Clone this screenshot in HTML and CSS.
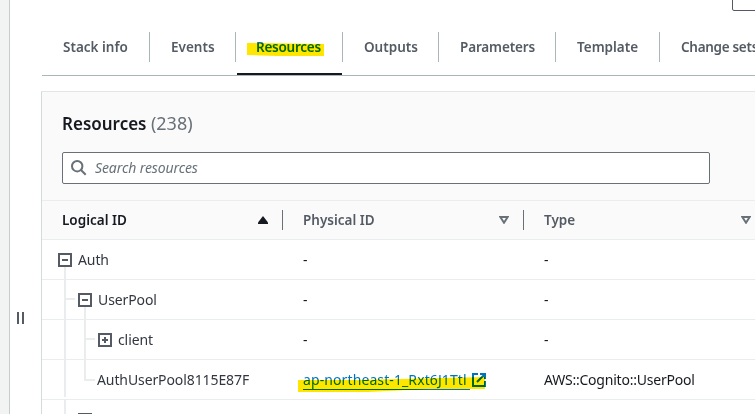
FILE: index.html
```html
<!DOCTYPE html>
<html lang="en">
<head>
<meta charset="utf-8">
<title>Stack resources</title>
<link rel="stylesheet" href="styles.css">
</head>
<body>
<div class="app">
  <aside class="rail"></aside>
  <div class="handle"><i></i><i></i></div>
  <main class="main">
    <span class="button-edge"></span>
    <nav class="tabs">
      <a class="tab tab-info"><span>Stack info</span></a>
      <a class="tab tab-events"><span>Events</span></a>
      <a class="tab tab-resources active"><span>Resources</span>
        <svg class="marker" width="77" height="13"><path d="M0 0 77 1V13H30L0 12Z"/></svg>
      </a>
      <a class="tab tab-outputs"><span>Outputs</span></a>
      <a class="tab tab-parameters"><span>Parameters</span></a>
      <a class="tab tab-template"><span>Template</span></a>
      <a class="tab tab-changes"><span>Change sets</span></a>
    </nav>
    <section class="panel">
      <header class="panel-head">
        <h2><span class="title">Resources</span> <span class="count">(238)</span></h2>
        <div class="search">
          <svg width="16" height="16" viewBox="0 0 16 16"><circle cx="6.2" cy="6.2" r="5.2"/><path d="M10 10l4.7 4.7"/></svg>
          <span class="placeholder">Search resources</span>
        </div>
      </header>
      <div class="row head">
        <div class="cell sorted"><span>Logical ID</span><svg width="10" height="8"><path class="up" d="M5 0 10 6.5V8H0V6.5Z"/></svg></div>
        <div class="cell"><span>Physical ID</span><svg width="10" height="8"><path class="down" d="M1.3 1H8.7L5 6.7Z"/></svg></div>
        <div class="cell"><span>Type</span><svg width="10" height="8"><path class="down" d="M1.3 1H8.7L5 6.7Z"/></svg></div>
      </div>
      <div class="body">
        <svg class="guides" width="80" height="174"><path d="M23 27V157M23 160V174M24 59H33M43 67V140H53M44 99H53"/></svg>
        <div class="row">
          <div class="cell level-0"><svg class="toggle" width="14" height="14"><rect x="1" y="1" width="12" height="12"/><path d="M4 7H10"/></svg><span>Auth</span></div>
          <div class="cell">-</div><div class="cell">-</div>
        </div>
        <div class="row">
          <div class="cell level-1"><svg class="toggle" width="14" height="14"><rect x="1" y="1" width="12" height="12"/><path d="M4 7H10"/></svg><span>UserPool</span></div>
          <div class="cell">-</div><div class="cell">-</div>
        </div>
        <div class="row">
          <div class="cell level-2"><svg class="toggle" width="14" height="14"><rect x="1" y="1" width="12" height="12"/><path d="M4 7H10M7 4V10"/></svg><span>client</span></div>
          <div class="cell">-</div><div class="cell">-</div>
        </div>
        <div class="row">
          <div class="cell leaf"><span>AuthUserPool8115E87F</span></div>
          <div class="cell"><a class="link"><span class="link-text">ap-northeast-1_Rxt6J1Ttl</span><svg class="external" width="14" height="14"><path d="M6 1H1V13H13V8M8 1H13V6M12.5 1.5 5 9"/></svg>
            <svg class="marker" width="187" height="15"><path d="M0 3 60 3 187 0V12L130 12 70 15H0Z"/></svg></a></div>
          <div class="cell"><span class="type">AWS::Cognito::UserPool</span></div>
        </div>
        <div class="row">
          <div class="cell level-1"><svg class="toggle" width="14" height="14"><rect x="1" y="1" width="12" height="12"/><path d="M4 7H10"/></svg></div>
          <div class="cell"></div><div class="cell"></div>
        </div>
      </div>
    </section>
  </main>
</div>
</body>
</html>
```
FILE: styles.css
```css
* { box-sizing: border-box; }
body { margin: 0; overflow: hidden; background: #fff; color: #16191f; font: 14px/20px "Noto Sans", sans-serif; }
svg { display: block; flex: none; }
.app { display: flex; width: 755px; height: 414px; overflow: hidden; }
.rail { flex: none; width: 10px; background: #f2f3f3; border-right: 1px solid #c6cbcb; }
.handle { flex: none; width: 31px; display: flex; gap: 3px; padding: 312px 0 0 7px; }
.handle i { width: 2px; height: 12px; background: #545b64; }
.main { position: relative; flex: none; width: 800px; padding-top: 32px; }
.button-edge { position: absolute; left: 691px; top: -20px; width: 60px; height: 31px; border: 1px solid #545b64; border-radius: 2px; }

.tabs { display: flex; height: 44px; margin-left: 1px; border-bottom: 1px solid #aab7b8; color: #545b64; font-size: 13.5px; font-weight: 600; }
.tab { position: relative; flex: none; height: 30px; padding: 5px 0 0 21px; border-right: 1px solid #aab7b8; white-space: nowrap; }
.tab-info { width: 108px; }
.tab-events { width: 86px; }
.tab-resources { width: 107px; letter-spacing: -0.25px; }
.tab-outputs { width: 96px; }
.tab-parameters { width: 117px; letter-spacing: -0.15px; }
.tab-template { width: 104px; }
.tab-changes { width: 120px; letter-spacing: -0.3px; }
.active { color: #0073bb; padding-left: 20px; }
.active::after { content: ""; position: absolute; left: 1px; right: 0; top: 41px; height: 2px; background: #16191f; }
.marker { position: absolute; mix-blend-mode: multiply; fill: #ffe600; }
.tab .marker { left: 11px; top: 11px; }

.panel { margin-top: 15px; border: 1px solid #e3e6e6; border-left-color: #d5dbdb; height: 400px; }
.panel-head { height: 108px; padding: 20px 20px 0; background: #fafafa; }
h2 { margin: 0; height: 22px; font-size: 17px; line-height: 22px; font-weight: 600; white-space: nowrap; }
.count { color: #687078; font-size: 18px; font-weight: 400; }
.search { display: flex; align-items: center; width: 648px; height: 32px; margin-top: 18px; padding-left: 8px; gap: 8px; background: #fff; border: 1px solid #687078; border-radius: 2px; }
.search svg { fill: none; stroke: #687078; stroke-width: 2; }
.placeholder { color: #687078; font-style: italic; letter-spacing: -0.1px; }

.row { display: grid; grid-template-columns: 241px 241px 260px; height: 40px; border-bottom: 1px solid #eaeded; }
.cell { display: flex; align-items: center; padding-left: 20px; white-space: nowrap; }
.head { background: #fafafa; border-top: 1px solid #eaeded; color: #545b64; font-size: 13.5px; font-weight: 600; }
.head .cell { position: relative; justify-content: space-between; padding-right: 15px; }
.head .cell:last-child { padding-right: 33px; }
.head .cell:not(:last-child)::after { content: ""; position: absolute; right: 0; top: 9px; width: 1px; height: 20px; background: #687078; }
.head .sorted { color: #16191f; }
.up { fill: #16191f; }
.down { fill: none; stroke: #687078; stroke-width: 2; }
.body { position: relative; }
.guides { position: absolute; left: 0; top: 0; fill: none; stroke: #eaeded; stroke-width: 2; }
.toggle { position: relative; margin-right: 6px; fill: #fff; stroke: #545b64; stroke-width: 2; }
.level-0 { padding-left: 16px; }
.level-1 { padding-left: 36px; }
.level-2 { padding-left: 56px; }
.leaf { padding-left: 55px; }
.body .cell:first-child { color: #323740; letter-spacing: -0.1px; }
.type { letter-spacing: -0.22px; }
.link { position: relative; display: flex; align-items: center; color: #0073bb; }
.link-text { width: 167px; height: 20px; line-height: 19px; letter-spacing: 0.1px; border-bottom: 1px solid #0073bb; }
.external { margin-left: 2px; fill: none; stroke: #0073bb; stroke-width: 2; }
.link .marker { left: -5px; top: 7px; }
```
